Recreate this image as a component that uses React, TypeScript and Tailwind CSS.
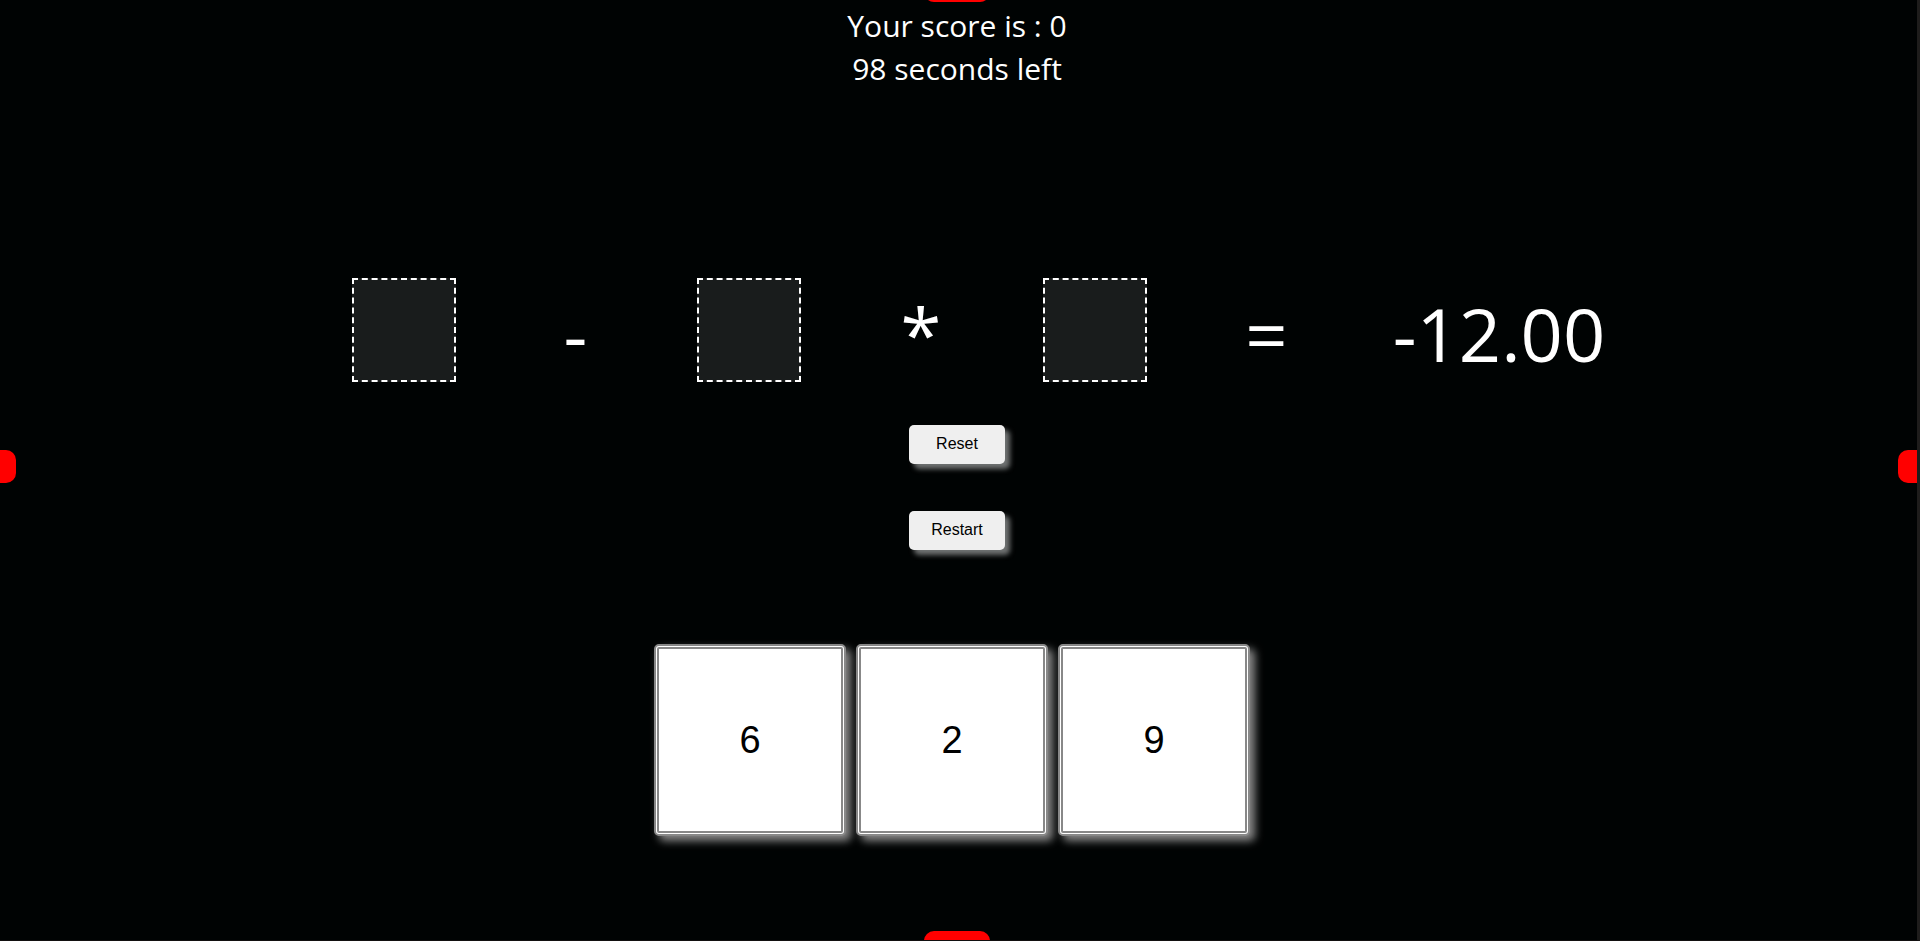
import React from "react";

const terms = ["slot", "-", "slot", "*", "slot", "="];
const cards = [6, 2, 9];

function Slot({ label }: { label: string }) {
  return (
    <div
      aria-label={label}
      className="ml-0.5 h-[104px] w-[104px] border-2 border-dashed border-white bg-[#191c1c]"
    />
  );
}

function ActionButton({ children }: { children: React.ReactNode }) {
  return (
    <button
      type="button"
      className="h-[39px] w-24 rounded-[5px] bg-[#efefef] pb-0.5 font-['Liberation_Sans',Arial,sans-serif] text-base leading-5 text-black shadow-[5px_5px_5px_#6f7272]"
    >
      {children}
    </button>
  );
}

export default function App() {
  return (
    <div className="relative min-h-screen overflow-hidden border-r-[3px] border-b border-r-[#1e1d1c] border-b-[#121010] bg-[#000303] font-['Open_Sans',sans-serif] text-white">
      <div aria-hidden="true" className="absolute -top-[31px] left-1/2 -ml-[35px] h-[33px] w-[66px] rounded-[10px] bg-[#ff0000]" />
      <div aria-hidden="true" className="absolute top-[450px] -left-[50px] h-[33px] w-[66px] rounded-[10px] bg-[#ff0000]" />
      <div aria-hidden="true" className="absolute top-[450px] -right-[47px] h-[33px] w-[66px] rounded-[10px] bg-[#ff0000]" />
      <div aria-hidden="true" className="absolute -bottom-[24px] left-1/2 -ml-[35px] h-[33px] w-[66px] rounded-[10px] bg-[#ff0000]" />

      <header className="pt-1 pr-[3px] text-center text-[30px] leading-[43px]">
        <p>Your score is : 0</p>
        <p>98 seconds left</p>
      </header>

      <main className="pt-[188px]">
        <div className="mx-auto flex w-[67%] items-start text-[74px] leading-[112px]">
          {terms.map((term, i) => (
            <div key={i} className="flex w-[13.45%] shrink-0 justify-center">
              {term === "slot" ? <Slot label={`Number ${i / 2 + 1}`} /> : term}
            </div>
          ))}
          <div className="ml-10 flex flex-1 justify-center whitespace-nowrap">-12.00</div>
        </div>

        <div className="flex flex-col items-center gap-[47px] pt-[35px] pr-[3px]">
          <ActionButton>Reset</ActionButton>
          <ActionButton>Restart</ActionButton>
        </div>

        <div className="flex justify-center gap-[10px] pt-[94px] pr-[13px]">
          {cards.map((value) => (
            <button
              key={value}
              type="button"
              className="h-48 w-48 rounded-[5px] border-[5px] border-double border-[#888888] bg-white font-['Liberation_Sans',Arial,sans-serif] text-[38px] leading-10 text-black shadow-[5px_5px_8px_#888888]"
            >
              {value}
            </button>
          ))}
        </div>
      </main>
    </div>
  );
}
